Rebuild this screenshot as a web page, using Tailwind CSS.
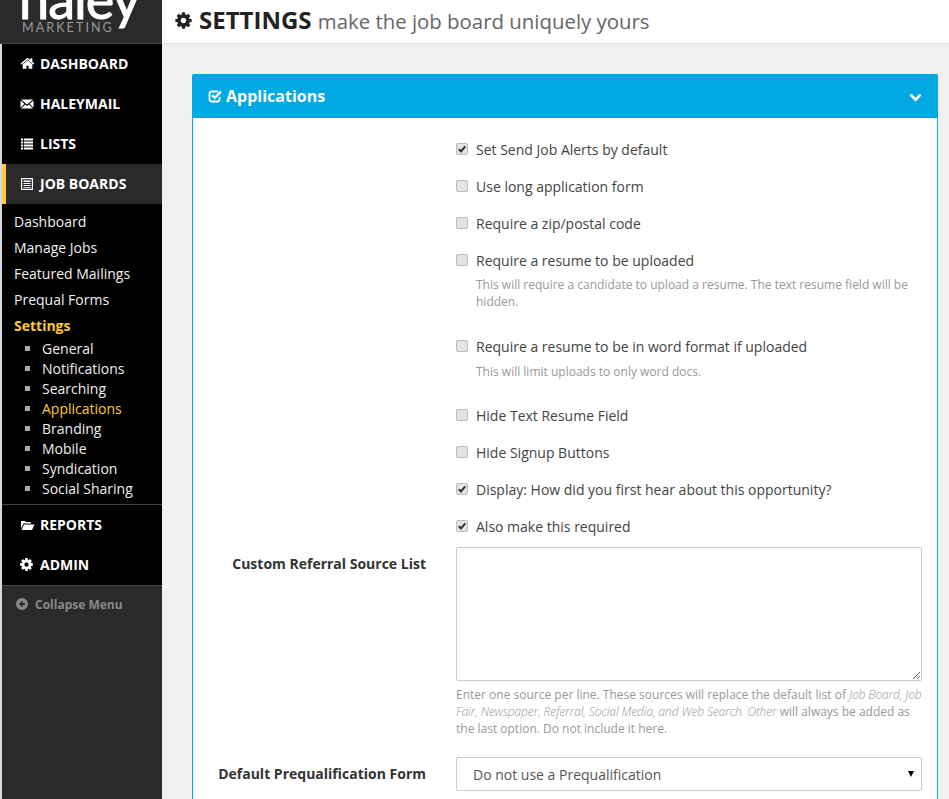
<!DOCTYPE html>
<html lang="en">
<head>
  <meta charset="UTF-8">
  <title>Settings</title>
  <script src="https://cdn.jsdelivr.net/npm/@tailwindcss/browser@4"></script>
</head>
<body class="bg-[#f1f1f1] text-[#333] font-['Open_Sans',sans-serif] h-[799px] overflow-hidden flex">

<!-- Sidebar -->
<aside class="w-[162px] h-[799px] shrink-0 flex flex-col bg-black">
  <div class="h-[44px] shrink-0 bg-[#2a2a2a] border-b border-[#444] overflow-hidden relative">
    <div class="absolute left-[19px] top-[-31px] text-white text-[54px] leading-[60px] font-['Lato',sans-serif] font-normal tracking-[-1px] [-webkit-text-stroke:1px_white]">haley</div>
    <div class="absolute left-[22px] top-[21px] text-[#999] text-[12.5px] leading-[14px] tracking-[2.1px] font-['Lato',sans-serif]">MARKETING</div>
  </div>
  <div class="flex-1 flex flex-col border-l-2 border-[#d8d8e0]">
    <nav class="font-bold text-[14px] text-white">
      <a class="h-[40px] flex items-center pl-[18px] pb-[1px] gap-[5px]">
        <svg class="w-[15px] h-[15px] fill-white" viewBox="0 0 1792 1792"><path d="M1472 992v480q0 26-19 45t-45 19h-384v-384h-256v384h-384q-26 0-45-19t-19-45v-480q0-1 .5-3t.5-3l575-474 575 474q1 2 1 6zm223-69l-62 74q-8 9-21 11h-3q-13 0-21-7l-692-577-692 577q-12 8-24 7-13-2-21-11l-62-74q-8-10-7-23.500t11-21.500l719-599q32-26 76-26t76 26l244 204v-195q0-14 9-23t23-9h192q14 0 23 9t9 23v408l219 182q10 8 11 21.500t-7 23.500z"/></svg>
        DASHBOARD</a>
      <a class="h-[40px] flex items-center pl-[18px] pb-[1px] gap-[6px]">
        <svg class="w-[14px] h-[14px] fill-white" viewBox="0 0 14 14"><path d="M1 2.500h12L7 7.500zM.5 3.500 4.400 6.800.5 10.800zM13.500 3.500 9.600 6.800l3.900 4zM5 7.400 7 9l2-1.600 4 4H1z"/></svg>
        HALEYMAIL</a>
      <a class="h-[40px] flex items-center pl-[18px] pb-[1px] gap-[6px]">
        <svg class="w-[14px] h-[14px] fill-white" viewBox="0 0 14 14"><path d="M1 1.500h2.200v2H1zM4 1.500h9v2H4zM1 4.500h2.200v2H1zM4 4.500h9v2H4zM1 7.500h2.200v2H1zM4 7.500h9v2H4zM1 10.500h2.200v2H1zM4 10.500h9v2H4z"/></svg>
        LISTS</a>
      <a class="h-[40px] flex items-center pl-[14px] pb-[1px] gap-[6px] bg-[#2a2a2a] border-l-4 border-[#fdcb2e]">
        <svg class="w-[14px] h-[14px] shrink-0 fill-white" viewBox="0 0 14 14"><path fill-rule="evenodd" d="M1 1h12v12H1zM2.200 2.200v9.600h9.600V2.200zM3.500 3.500h7V5h-7zM3.500 6h7v1h-7zM3.500 8h7v1h-7zM3.500 10h7v.8h-7z"/></svg>
        JOB BOARDS</a>
    </nav>

    <ul class="text-[14px] text-[#f0f0f0] pl-[12px] pt-[5px]">
      <li class="h-[26px] leading-[26px]">Dashboard</li>
      <li class="h-[26px] leading-[26px]">Manage Jobs</li>
      <li class="h-[26px] leading-[26px]">Featured Mailings</li>
      <li class="h-[26px] leading-[26px]">Prequal Forms</li>
      <li class="h-[26px] leading-[26px] font-bold text-[#fdcb2e]">Settings</li>
    </ul>

    <ul class="text-[14px] text-[#f0f0f0] -mt-px pb-[6px] border-b border-[#444]">
      <li class="h-[20px] flex items-center gap-[12px] pl-[23px]"><span class="w-[5px] h-[5px] bg-[#aaa]"></span>General</li>
      <li class="h-[20px] flex items-center gap-[12px] pl-[23px]"><span class="w-[5px] h-[5px] bg-[#aaa]"></span>Notifications</li>
      <li class="h-[20px] flex items-center gap-[12px] pl-[23px]"><span class="w-[5px] h-[5px] bg-[#aaa]"></span>Searching</li>
      <li class="h-[20px] flex items-center gap-[12px] pl-[23px] text-[#fdcb2e]"><span class="w-[5px] h-[5px] bg-[#aaa]"></span>Applications</li>
      <li class="h-[20px] flex items-center gap-[12px] pl-[23px]"><span class="w-[5px] h-[5px] bg-[#aaa]"></span>Branding</li>
      <li class="h-[20px] flex items-center gap-[12px] pl-[23px]"><span class="w-[5px] h-[5px] bg-[#aaa]"></span>Mobile</li>
      <li class="h-[20px] flex items-center gap-[12px] pl-[23px]"><span class="w-[5px] h-[5px] bg-[#aaa]"></span>Syndication</li>
      <li class="h-[20px] flex items-center gap-[12px] pl-[23px]"><span class="w-[5px] h-[5px] bg-[#aaa]"></span>Social Sharing</li>
    </ul>

    <nav class="font-bold text-[14px] text-white">
      <a class="h-[40px] flex items-center pl-[18px] pb-[1px] gap-[5px]">
        <svg class="w-[15px] h-[14px] fill-white" viewBox="0 0 15 14"><path d="M1 3h4l1 1h5v1.500H3.500L1 10.500zM4 6.500h10.500L12 12H1.500z"/></svg>
        REPORTS</a>
      <a class="h-[40px] flex items-center pl-[17px] pb-[1px] gap-[6px]">
        <svg class="w-[15px] h-[15px] fill-white" viewBox="0 0 1792 1792"><path d="M1152 896q0-106-75-181t-181-75-181 75-75 181 75 181 181 75 181-75 75-181zm512-109v222q0 12-8 23t-20 13l-185 28q-19 54-39 91 35 50 107 138 10 12 10 25t-9 23q-27 37-99 108t-94 71q-12 0-26-9l-138-108q-44 23-91 38-16 136-29 186-7 28-36 28h-222q-14 0-24.500-8.500t-11.500-21.500l-28-184q-49-16-90-37l-141 107q-10 9-25 9-14 0-25-11-126-114-165-168-7-10-7-23 0-12 8-23 15-21 51-66.500t54-70.500q-27-50-41-99l-183-27q-13-2-21-12.500t-8-23.500v-222q0-12 8-23t19-13l186-28q14-46 39-92-40-57-107-138-10-12-10-24 0-10 9-23 26-36 98.500-107.500t94.500-71.500q13 0 26 10l138 107q44-23 91-38 16-136 29-186 7-28 36-28h222q14 0 24.500 8.500t11.500 21.500l28 184q49 16 90 37l142-107q9-9 24-9 13 0 25 10 129 119 165 170 7 8 7 22 0 12-8 23-15 21-51 66.500t-54 70.500q26 50 41 98l183 28q13 2 21 12.500t8 23.500z"/></svg>
        ADMIN</a>
    </nav>

    <div class="flex-1 bg-[#2a2a2a] border-t border-[#444] text-[#888] text-[12px] font-bold pl-[14px] pt-[10px] flex items-start gap-[7px] leading-[18px]">
      <svg class="w-[12px] h-[12px] mt-[2px] fill-[#888]" viewBox="0 0 12 12"><path fill-rule="evenodd" d="M6 0a6 6 0 1 1 0 12A6 6 0 0 1 6 0zM6.200 2.800 3 6l3.200 3.200 1-1L6 7h3V5H6l1.200-1.200z"/></svg>
      Collapse Menu
    </div>
  </div>
</aside>

<!-- Main -->
<main class="flex-1 min-w-0">
  <header class="h-[44px] bg-white border-b border-[#ddd] flex items-center pl-[12px] gap-[6px]">
    <svg class="w-[19px] h-[19px] fill-[#222] shrink-0 -mt-[3px]" viewBox="0 0 1792 1792"><path d="M1152 896q0-106-75-181t-181-75-181 75-75 181 75 181 181 75 181-75 75-181zm512-109v222q0 12-8 23t-20 13l-185 28q-19 54-39 91 35 50 107 138 10 12 10 25t-9 23q-27 37-99 108t-94 71q-12 0-26-9l-138-108q-44 23-91 38-16 136-29 186-7 28-36 28h-222q-14 0-24.500-8.500t-11.500-21.500l-28-184q-49-16-90-37l-141 107q-10 9-25 9-14 0-25-11-126-114-165-168-7-10-7-23 0-12 8-23 15-21 51-66.500t54-70.500q-27-50-41-99l-183-27q-13-2-21-12.500t-8-23.500v-222q0-12 8-23t19-13l186-28q14-46 39-92-40-57-107-138-10-12-10-24 0-10 9-23 26-36 98.500-107.500t94.500-71.500q13 0 26 10l138 107q44-23 91-38 16-136 29-186 7-28 36-28h222q14 0 24.500 8.500t11.500 21.500l28 184q49 16 90 37l142-107q9-9 24-9 13 0 25 10 129 119 165 170 7 8 7 22 0 12-8 23-15 21-51 66.500t-54 70.500q26 50 41 98l183 28q13 2 21 12.500t8 23.500z"/></svg>
    <h1 class="text-[24px] font-bold text-[#222] leading-[30px] -mt-[3px] whitespace-nowrap">SETTINGS <span class="text-[20.4px] font-normal text-[#666]">make the job board uniquely yours</span></h1>
  </header>

  <section class="ml-[30px] mr-[11px] mt-[30px] h-[800px] bg-white border border-[#00a8e4] border-b-0 rounded-t-[2px]">
    <div class="h-[44px] -mt-px bg-[#00a8e4] text-white flex items-center justify-between pl-[15px] pr-[15px]">
      <div class="flex items-center gap-[4px] font-bold text-[16px]">
        <svg class="w-[14px] h-[14px] fill-none stroke-white stroke-[1.800]" viewBox="0 0 14 14"><path d="M11.500 8v2.500a2 2 0 0 1-2 2h-6a2 2 0 0 1-2-2v-6a2 2 0 0 1 2-2H10"/><path stroke-width="2.400" d="M4 6l2.700 2.800L13 2.600"/></svg>
        Applications
      </div>
      <svg class="w-[13px] h-[13px] fill-white" viewBox="0 0 1792 1792"><path d="M1683 808l-742 741q-19 19-45 19t-45-19l-742-741q-19-19-19-45.500t19-45.500l166-165q19-19 45-19t45 19l531 531 531-531q19-19 45-19t45 19l166 165q19 19 19 45.500t-19 45.500z"/></svg>
    </div>

    <form class="pt-[20px] pr-[15px] text-[14px] text-[#444]">
      <div class="pl-[263px] flex flex-col">
        <label class="h-[22px] flex items-center gap-[8px] mb-[15px]"><span class="relative w-[12px] h-[12px] shrink-0"><input type="checkbox" checked class="appearance-none block w-[12px] h-[12px] m-0 bg-[#e4e4e4] border border-[#bbb] rounded-[2px]"><svg class="absolute left-[2px] top-[2px] w-[8px] h-[8px] fill-none stroke-[#333] stroke-[2]" viewBox="0 0 8 8"><path d="M.8 4.200 3 6.500 7.300 1.300"/></svg></span>Set Send Job Alerts by default</label>
        <label class="h-[22px] flex items-center gap-[8px] mb-[15px]"><input type="checkbox" class="appearance-none block w-[12px] h-[12px] m-0 bg-[#e4e4e4] border border-[#bbb] rounded-[2px]">Use long application form</label>
        <label class="h-[22px] flex items-center gap-[8px] mb-[15px]"><input type="checkbox" class="appearance-none block w-[12px] h-[12px] m-0 bg-[#e4e4e4] border border-[#bbb] rounded-[2px]">Require a zip/postal code</label>
        <label class="h-[22px] flex items-center gap-[8px]"><input type="checkbox" class="appearance-none block w-[12px] h-[12px] m-0 bg-[#e4e4e4] border border-[#bbb] rounded-[2px]">Require a resume to be uploaded</label>
        <p class="pl-[20px] text-[12px] leading-[17px] text-[#999] mt-[5px] mb-[25px]">This will require a candidate to upload a resume. The text resume field will be hidden.</p>
        <label class="h-[22px] flex items-center gap-[8px]"><input type="checkbox" class="appearance-none block w-[12px] h-[12px] m-0 bg-[#e4e4e4] border border-[#bbb] rounded-[2px]">Require a resume to be in word format if uploaded</label>
        <p class="pl-[20px] text-[12px] leading-[17px] text-[#999] mt-[6px] mb-[24px]">This will limit uploads to only word docs.</p>
        <label class="h-[22px] flex items-center gap-[8px] mb-[15px]"><input type="checkbox" class="appearance-none block w-[12px] h-[12px] m-0 bg-[#e4e4e4] border border-[#bbb] rounded-[2px]">Hide Text Resume Field</label>
        <label class="h-[22px] flex items-center gap-[8px] mb-[15px]"><input type="checkbox" class="appearance-none block w-[12px] h-[12px] m-0 bg-[#e4e4e4] border border-[#bbb] rounded-[2px]">Hide Signup Buttons</label>
        <label class="h-[22px] flex items-center gap-[8px] mb-[15px]"><span class="relative w-[12px] h-[12px] shrink-0"><input type="checkbox" checked class="appearance-none block w-[12px] h-[12px] m-0 bg-[#e4e4e4] border border-[#bbb] rounded-[2px]"><svg class="absolute left-[2px] top-[2px] w-[8px] h-[8px] fill-none stroke-[#333] stroke-[2]" viewBox="0 0 8 8"><path d="M.8 4.200 3 6.500 7.300 1.300"/></svg></span>Display: How did you first hear about this opportunity?</label>
        <label class="h-[22px] flex items-center gap-[8px] mb-[10px]"><span class="relative w-[12px] h-[12px] shrink-0"><input type="checkbox" checked class="appearance-none block w-[12px] h-[12px] m-0 bg-[#e4e4e4] border border-[#bbb] rounded-[2px]"><svg class="absolute left-[2px] top-[2px] w-[8px] h-[8px] fill-none stroke-[#333] stroke-[2]" viewBox="0 0 8 8"><path d="M.8 4.200 3 6.500 7.300 1.300"/></svg></span>Also make this required</label>
      </div>

      <div class="grid grid-cols-[233px_466px] gap-x-[30px] items-start">
        <label class="text-right font-bold text-[#333] pt-[7px] leading-[20px]">Custom Referral Source List</label>
        <div>
          <textarea class="block w-full h-[134px] border border-[#ccc] rounded-[2px] bg-white"></textarea>
          <p class="text-[12px] leading-[17px] text-[#999] mt-[5px] mb-[20px]">Enter one source per line. These sources will replace the default list of <em class="font-light tracking-[-0.1px]">Job Board, Job Fair, Newspaper, Referral, Social Media, and Web Search. Other</em> will always be added as the last option. Do not include it here.</p>
        </div>
        <label class="text-right font-bold text-[#333] pt-[7px] leading-[20px]">Default Prequalification Form</label>
        <div class="relative">
          <select class="appearance-none block w-full h-[34px] border border-[#ccc] rounded-[2px] bg-white pl-[16px] text-[14px] text-[#555]"><option>Do not use a Prequalification</option></select>
          <span class="absolute right-[8px] top-[14px] w-0 h-0 border-x-[3.5px] border-x-transparent border-t-[6px] border-t-black"></span>
        </div>
      </div>
    </form>
  </section>
</main>
</body>
</html>
